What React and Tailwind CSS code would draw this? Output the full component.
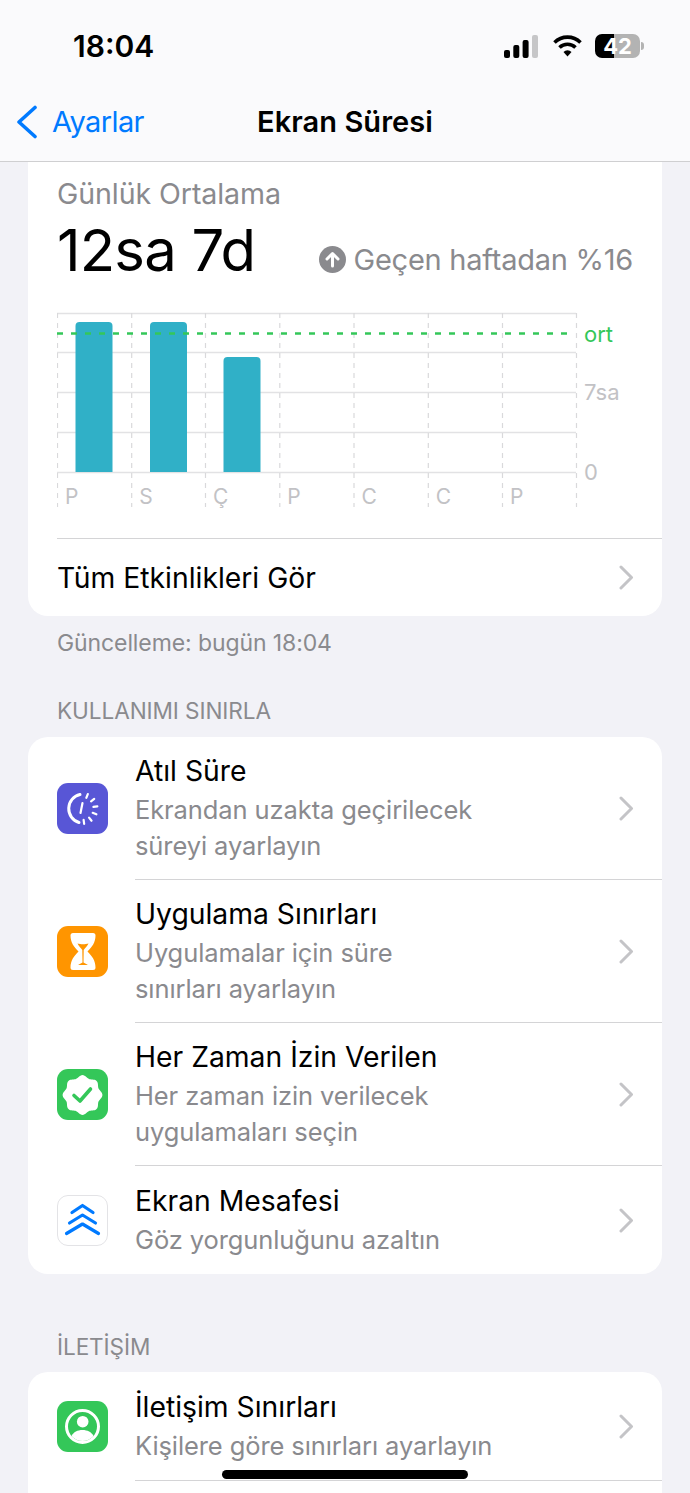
const font = { fontFamily: 'Inter, "Noto Sans", sans-serif' };

const Chevron = ({ className = '' }) => (
  <svg width="15" height="25" viewBox="0 0 15 25" className={`shrink-0 ${className}`} fill="none">
    <path d="M2 2 12.500 12.500 2 23" stroke="#c4c4c7" strokeWidth="3" strokeLinecap="round" strokeLinejoin="round" />
  </svg>
);

const Downtime = () => {
  const ticks = [-68, -38, -8, 22, 52, 82];
  return (
    <svg width="51" height="51" viewBox="0 0 51 51">
      <rect width="51" height="51" rx="11" fill="#5856d6" />
      <path d="M23 11.500A14.500 14.500 0 0 0 22 39.500" fill="none" stroke="#fff" strokeWidth="3" strokeLinecap="round" />
      <path d="M25.500 20 23.500 30" fill="none" stroke="#fff" strokeWidth="2.200" strokeLinecap="round" />
      <g stroke="#fff" strokeWidth="2.200" strokeLinecap="round">
        {ticks.map(a => {
          const r = a * Math.PI / 180;
          return <line key={a} x1={25 + 11.5 * Math.cos(r)} y1={25.5 + 11.5 * Math.sin(r)} x2={25 + 15.5 * Math.cos(r)} y2={25.5 + 15.5 * Math.sin(r)} />;
        })}
      </g>
    </svg>
  );
};

const Hourglass = () => (
  <svg width="51" height="51" viewBox="0 0 51 51">
    <rect width="51" height="51" rx="11" fill="#ff9500" />
    <path d="M16 7h20a2.500 2.500 0 0 1 2.500 2.500c0 7-3.500 11.500-8 16 4.500 4.500 8 9 8 16a2.500 2.500 0 0 1-2.500 2.500H16a2.500 2.500 0 0 1-2.500-2.500c0-7 3.500-11.500 8-16-4.500-4.500-8-9-8-16A2.500 2.500 0 0 1 16 7z" fill="#fff" />
    <path d="M20.500 17.500c3 1 8 1 11 0-1 2.500-3.500 4.500-4.800 6.500l-.2 12.500 4.500 2.500H21l4.500-2.500-.2-12.500c-1.300-2-3.800-4-4.800-6.500z" fill="#ff9500" />
  </svg>
);

// scalloped badge outline, eight lobes
const badgePath = () => {
  let d = '';
  for (let i = 0; i <= 120; i++) {
    const a = (i / 120) * Math.PI * 2;
    const r = 18.6 + 1.3 * Math.cos(a * 8);
    d += `${i === 0 ? 'M' : 'L'}${(25.5 + r * Math.cos(a)).toFixed(2)} ${(26 + r * Math.sin(a)).toFixed(2)}`;
  }
  return d + 'z';
};

const Badge = () => (
  <svg width="51" height="51" viewBox="0 0 51 51">
    <rect width="51" height="51" rx="11" fill="#34c759" />
    <path d={badgePath()} fill="#fff" />
    <path d="M17 26.500 23 32 33.500 20" fill="none" stroke="#34c759" strokeWidth="3.600" strokeLinecap="round" strokeLinejoin="round" />
  </svg>
);

const Distance = () => (
  <svg width="51" height="51" viewBox="0 0 51 51">
    <rect x="0.500" y="0.500" width="50" height="50" rx="10.500" fill="#fff" stroke="#e3e3e6" />
    <g fill="none" stroke="#007aff" strokeWidth="3.200" strokeLinecap="round" strokeLinejoin="round">
      <path d="M15 17.500 25.500 10.500 36 17.500" />
      <path d="M12.500 28 25.500 20 38.500 28" />
      <path d="M9.500 38.500 25.500 29 41.500 38.500" />
    </g>
  </svg>
);

const Contact = () => (
  <svg width="51" height="51" viewBox="0 0 51 51">
    <rect width="51" height="51" rx="11" fill="#34c759" />
    <circle cx="25.500" cy="25.500" r="16" fill="none" stroke="#fff" strokeWidth="3" />
    <circle cx="25.700" cy="20.700" r="5.800" fill="#fff" />
    <path d="M14.500 35c2-4 6-6 11-6s9 2 11 6a14.500 14.500 0 0 1-22 0z" fill="#fff" />
  </svg>
);

const Chart = () => {
  const cols = [0, 74.200, 148, 222.300, 296.500, 370.800, 445, 519];
  const rows = [1, 40, 80, 120, 160];
  const bars = [
    { x: 18.500, y: 10 },
    { x: 93, y: 10 },
    { x: 166.500, y: 45 },
  ];
  const days = ['P', 'S', 'Ç', 'P', 'C', 'C', 'P'];
  return (
    <svg width="580" height="200" viewBox="0 0 580 200" className="block" style={font}>
      {rows.map(y => <line key={y} x1="0" x2="519" y1={y + 0.500} y2={y + 0.500} stroke="#e2e2e4" strokeWidth="1.400" />)}
      {cols.map(x => <line key={x} x1={x + 0.500} x2={x + 0.500} y1="1" y2="195" stroke="#d9d9db" strokeWidth="1.200" strokeDasharray="5 5" />)}
      {bars.map(b => (
        <path key={b.x} d={`M${b.x} 160V${b.y + 4}a4 4 0 0 1 4-4h29a4 4 0 0 1 4 4V160z`} fill="#30b0c7" />
      ))}
      <line x1="0" x2="516" y1="21.500" y2="21.500" stroke="#34c759" strokeWidth="2.500" strokeDasharray="6 8" />
      {days.map((d, i) => (
        <text key={i} x={cols[i] + 8} y="192" fontSize="21" fill="#c2c2c5">{d}</text>
      ))}
      <text x="527" y="30" fontSize="22" fill="#34c759">ort</text>
      <text x="527" y="88" fontSize="22" fill="#c2c2c5">7sa</text>
      <text x="527" y="168" fontSize="22" fill="#c2c2c5">0</text>
    </svg>
  );
};

const Row = ({ icon, title, lines, last }) => (
  <div className="flex items-stretch">
    <div className="w-[107px] shrink-0 flex items-center pl-[29px]">{icon}</div>
    <div className={`flex-1 flex items-center pr-[28px] ${lines.length === 1 ? 'pt-[18px] pb-[16px]' : 'pt-[17px] pb-[15px]'} ${last ? '' : 'border-b border-[#d4d4d6]'}`}>
      <div className="flex-1">
        <p className="text-[28.300px] leading-[34px] text-black">{title}</p>
        <div className="mt-[4px]">
          {lines.map(l => (
            <p key={l} className="text-[25.500px] leading-[36px] text-[#8a8a8e] tracking-[-0.1px]">{l}</p>
          ))}
        </div>
      </div>
      <Chevron className="-mt-[2px]" />
    </div>
  </div>
);

export default function App() {
  return (
    <div className="relative h-[1493px] w-[690px] overflow-hidden bg-[#f2f2f7]" style={font}>
      {/* Header */}
      <div className="h-[162px] bg-[#fafafc] border-b border-[#cfcfd1]">
        <div className="h-[92px] flex items-start justify-between pl-[73px] pr-[46px] pt-[27px]">
          <span className="text-[30px] leading-[38px] font-semibold text-black">18:04</span>
          <div className="flex items-center gap-[15px] mt-[7px]">
            <svg width="34" height="23" viewBox="0 0 34 23">
              <rect x="0" y="15" width="6" height="8" rx="2" fill="#000" />
              <rect x="9.300" y="10" width="6" height="13" rx="2" fill="#000" />
              <rect x="18.600" y="5" width="6" height="18" rx="2" fill="#000" />
              <rect x="28" y="0" width="6" height="23" rx="2" fill="#c6c6c8" />
            </svg>
            <svg width="29" height="22" viewBox="0 0 29 22" fill="none" stroke="#000" strokeWidth="3.600" strokeLinecap="butt">
              <path d="M1.500 7.500a18.500 18.500 0 0 1 26 0" />
              <path d="M6.500 12.500a11.500 11.500 0 0 1 16 0" />
              <path d="M14.500 21.500 10.500 17a5.500 5.500 0 0 1 8 0z" fill="#000" stroke="none" />
            </svg>
            <div className="flex items-center gap-[1px] -ml-[2px]">
              <div className="h-[24px] w-[45px] rounded-[7px] bg-[linear-gradient(90deg,#000_42%,#b3b3b3_42%)] flex items-center justify-center text-white text-[22px] font-bold leading-none">
                42
              </div>
              <div className="h-[8px] w-[3px] rounded-r-full bg-[#b3b3b3]" />
            </div>
          </div>
        </div>
        <div className="relative flex items-center justify-center h-[60px]">
          <div className="absolute left-[16px] top-[11px] flex items-center gap-[14px] text-[#007aff]">
            <svg width="22" height="34" viewBox="0 0 22 34" fill="none">
              <path d="M19 2.500 3 17 19 31.500" stroke="#007aff" strokeWidth="3.600" strokeLinecap="round" strokeLinejoin="round" />
            </svg>
            <span className="text-[29px] leading-[38px] tracking-[-0.6px]">Ayarlar</span>
          </div>
          <span className="text-[29px] leading-[38px] font-semibold text-black tracking-[0.05px]">Ekran Süresi</span>
        </div>
      </div>

      {/* Summary card */}
      <div className="mx-[28px] bg-white rounded-b-[20px] pl-[29px]">
        <p className="pt-[14px] text-[28.600px] leading-[36px] text-[#8a8a8e] tracking-[-0.1px]">Günlük Ortalama</p>
        <div className="flex items-center justify-between pr-[29px] mt-[4px]">
          <span className="text-[58px] leading-[68px] text-black tracking-[-0.8px]">12sa 7d</span>
          <div className="flex items-center gap-[8px] mt-[19px]">
            <svg width="27" height="27" viewBox="0 0 27 27">
              <circle cx="13.500" cy="13.500" r="13.500" fill="#8a8a8e" />
              <path d="M13.500 20V8M8 13l5.500-5.500L19 13" fill="none" stroke="#fff" strokeWidth="3" strokeLinecap="round" strokeLinejoin="round" />
            </svg>
            <span className="text-[29px] leading-[38px] text-[#8a8a8e] tracking-[-0.25px]">Geçen haftadan %16</span>
          </div>
        </div>
        <div className="mt-[28px] mb-[26px]">
          <Chart />
        </div>
        <div className="flex items-center border-t border-[#d4d4d6] pr-[28px] h-[78px]">
          <span className="flex-1 pt-[2px] text-[28.300px] text-black">Tüm Etkinlikleri Gör</span>
          <Chevron />
        </div>
      </div>
      <p className="pl-[57px] mt-[12px] text-[23px] leading-[30px] text-[#8a8a8e] tracking-[-0.1px]">Güncelleme: bugün 18:04</p>

      {/* Limit usage */}
      <p className="pl-[57px] mt-[38px] text-[22.600px] leading-[30px] text-[#8a8a8e] tracking-[-0.1px]">KULLANIMI SINIRLA</p>
      <div className="mx-[28px] mt-[11px] bg-white rounded-[20px] overflow-hidden">
        <Row icon={<Downtime />} title="Atıl Süre" lines={['Ekrandan uzakta geçirilecek', 'süreyi ayarlayın']} />
        <Row icon={<Hourglass />} title="Uygulama Sınırları" lines={['Uygulamalar için süre', 'sınırları ayarlayın']} />
        <Row icon={<Badge />} title="Her Zaman İzin Verilen" lines={['Her zaman izin verilecek', 'uygulamaları seçin']} />
        <Row icon={<Distance />} title="Ekran Mesafesi" lines={['Göz yorgunluğunu azaltın']} last />
      </div>

      {/* Communication */}
      <p className="pl-[57px] mt-[58px] text-[22.600px] leading-[30px] text-[#8a8a8e] tracking-[-0.1px]">İLETİŞİM</p>
      <div className="mx-[28px] mt-[10px] bg-white rounded-t-[20px]">
        <Row icon={<Contact />} title="İletişim Sınırları" lines={['Kişilere göre sınırları ayarlayın']} />
        <div className="h-[60px]" />
      </div>

      {/* Home indicator */}
      <div className="absolute left-[222px] top-[1470px] h-[9px] w-[246px] rounded-full bg-black" />
    </div>
  );
}
